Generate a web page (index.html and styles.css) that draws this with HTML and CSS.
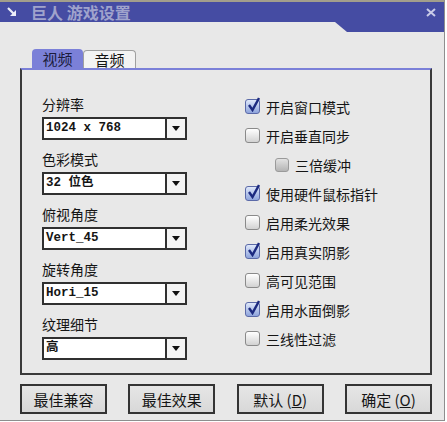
FILE: index.html
```html
<!DOCTYPE html>
<html lang="zh-CN">
<head>
    <meta charset="UTF-8">
    <title>巨人 游戏设置</title>
    <link rel="stylesheet" href="styles.css">
</head>
<body>
    <div class="window">
        <div class="titlebar">
            <div class="title-row">
                <svg class="title-icon" width="10" height="10" viewBox="0 0 10 10">
                    <path d="M1 1 L6.5 6.5" stroke="#eceef8" stroke-width="2.2" fill="none"/>
                    <path d="M9 3 L9 9 L3 9 Z" fill="#eceef8"/>
                </svg>
                <span class="title-text">巨人 游戏设置</span>
                <svg class="close" width="10" height="9" viewBox="0 0 10 9">
                    <path d="M1 1 L9 8 M9 1 L1 8" stroke="#c9cbe8" stroke-width="2" fill="none"/>
                </svg>
            </div>
            <div class="title-tail"><div class="tail"></div></div>
        </div>

        <div class="content">
            <div class="tabs">
                <div class="tab active">视频</div>
                <div class="tab">音频</div>
            </div>

            <div class="panel">
                <div class="col-left">
                    <div class="field">
                        <div class="label">分辨率</div>
                        <div class="select"><span class="value">1024 x 768</span><span class="drop"></span></div>
                    </div>
                    <div class="field">
                        <div class="label">色彩模式</div>
                        <div class="select"><span class="value">32 位色</span><span class="drop"></span></div>
                    </div>
                    <div class="field">
                        <div class="label">俯视角度</div>
                        <div class="select"><span class="value">Vert_45</span><span class="drop"></span></div>
                    </div>
                    <div class="field">
                        <div class="label">旋转角度</div>
                        <div class="select"><span class="value">Hori_15</span><span class="drop"></span></div>
                    </div>
                    <div class="field">
                        <div class="label">纹理细节</div>
                        <div class="select"><span class="value">高</span><span class="drop"></span></div>
                    </div>
                </div>

                <div class="col-right">
                    <div class="check on"><span class="box"></span>开启窗口模式</div>
                    <div class="check"><span class="box"></span>开启垂直同步</div>
                    <div class="check sub"><span class="box"></span>三倍缓冲</div>
                    <div class="check on"><span class="box"></span>使用硬件鼠标指针</div>
                    <div class="check"><span class="box"></span>启用柔光效果</div>
                    <div class="check on"><span class="box"></span>启用真实阴影</div>
                    <div class="check"><span class="box"></span>高可见范围</div>
                    <div class="check on"><span class="box"></span>启用水面倒影</div>
                    <div class="check"><span class="box"></span>三线性过滤</div>
                </div>
            </div>

            <div class="buttons">
                <button>最佳兼容</button>
                <button>最佳效果</button>
                <button>默认 (<u>D</u>)</button>
                <button>确定 (<u>O</u>)</button>
            </div>
        </div>
    </div>
</body>
</html>
```

FILE: styles.css
```css
body {
    margin: 0;
    background: #ffffff;
    font-family: "Noto Sans CJK SC", "Noto Sans", sans-serif;
    color: #151515;
}
.window {
    width: 444px;
    height: 420px;
    background: #e8e8e8;
    border-right: 1px solid #8e8e8e;
    border-bottom: 1px solid #8e8e8e;
}
.titlebar {
    display: flex;
    flex-direction: column;
}
.title-row {
    height: 20px;
    border-top: 2px solid #a29e8c;
    background: #454ca3;
    display: flex;
    align-items: center;
}
.title-icon {
    margin-left: 7px;
    margin-right: 14px;
}
.title-text {
    font-size: 16px;
    font-weight: bold;
    color: #a0a3cc;
    flex: 1;
    line-height: 20px;
}
.close {
    margin-right: 8px;
}
.title-tail {
    height: 10px;
    display: flex;
    justify-content: flex-end;
}
.tail {
    width: 109px;
    background: #454ca3;
    clip-path: polygon(0 0, 100% 0, 100% 100%, 12px 100%);
}
.content {
    padding-top: 17px;
}
.tabs {
    display: flex;
    align-items: flex-end;
    margin-left: 32px;
    height: 19px;
}
.tab {
    width: 53px;
    height: 18px;
    box-sizing: border-box;
    background: #f3f3f3;
    border: 1px solid #a0a0a0;
    border-bottom: none;
    border-radius: 4px 4px 0 0;
    font-size: 15px;
    line-height: 18px;
    text-align: center;
}
.tab.active {
    width: 51px;
    height: 19px;
    background: #7b80d8;
    border: none;
    line-height: 20px;
    color: #1a1c3c;
}
.panel {
    margin-left: 20px;
    width: 412px;
    height: 307px;
    box-sizing: border-box;
    border: 2px solid #3a3a3a;
    border-top: 2px solid #7b80d8;
    display: grid;
    grid-template-columns: 145px 1fr;
    column-gap: 58px;
    padding: 22px 0 0 20px;
}
.col-left {
    padding-top: 3px;
}
.field {
    margin-bottom: 10px;
}
.label {
    font-size: 14px;
    line-height: 18px;
    height: 18px;
    margin-bottom: 4px;
}
.select {
    height: 23px;
    box-sizing: border-box;
    border: 2px solid #303030;
    background: #ffffff;
    display: flex;
}
.value {
    flex: 1;
    padding-left: 2px;
    font-family: "Liberation Mono", "Noto Sans CJK SC", monospace;
    font-size: 12.5px;
    font-weight: bold;
    line-height: 19px;
}
.drop {
    width: 18px;
    border-left: 2px solid #303030;
    background: #f4f4f4;
    display: flex;
    align-items: center;
    justify-content: center;
}
.drop::after {
    content: "";
    border-left: 4px solid transparent;
    border-right: 4px solid transparent;
    border-top: 5px solid #111111;
}
.check {
    height: 29px;
    display: flex;
    align-items: center;
    font-size: 14px;
}
.box {
    width: 15px;
    height: 15px;
    box-sizing: border-box;
    border: 1px solid #8a8a8a;
    border-radius: 3px;
    background: linear-gradient(#ffffff, #d2d2d2);
    margin-right: 6px;
    position: relative;
}
.check.on .box {
    border-color: #5b6aa8;
    background: linear-gradient(#dfe8fa, #8ea4dc);
}
.check.on .box::after {
    content: "";
    position: absolute;
    left: 2px;
    top: -3px;
    width: 12px;
    height: 15px;
    background: url("data:image/svg+xml;utf8,<svg xmlns='http://www.w3.org/2000/svg' width='12' height='15' viewBox='0 0 12 15'><path d='M1 8 L4.5 13 L11 1' stroke='%231c2a80' stroke-width='2.4' fill='none'/></svg>");
}
.check.sub {
    padding-left: 30px;
}
.check.sub .box {
    width: 14px;
    height: 14px;
    border-color: #9a9a9a;
    background: linear-gradient(#e2e2e2, #b4b4b4);
}
.buttons {
    margin: 9px 0 0 20px;
    width: 412px;
    display: flex;
    justify-content: space-between;
}
button {
    width: 87px;
    height: 30px;
    border: 2px solid #343434;
    background: linear-gradient(#e6e6e6, #d8d8d8);
    font-family: "Noto Sans CJK SC", sans-serif;
    font-size: 15px;
    color: #151515;
    padding: 0;
}
```
